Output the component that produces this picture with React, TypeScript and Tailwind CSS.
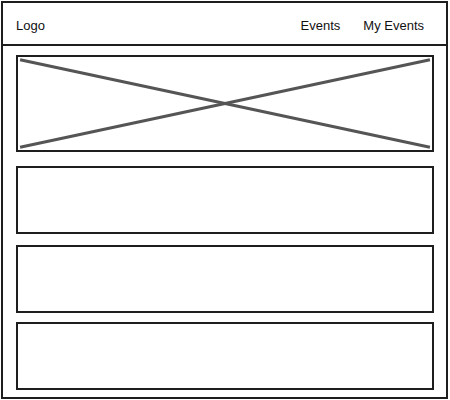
import React from "react";

export default function App() {
  return (
    <div className="w-[450px] h-[400px] bg-white pt-[1px] pl-[1px]" style={{ fontFamily: '"Liberation Sans", Arial, sans-serif' }}>
      <div className="w-[447px] h-[398px] border-2 border-[#1e1e1e] flex flex-col">
        <div className="h-[43px] border-b-2 border-[#1e1e1e] flex items-center justify-between pl-[13px] pr-[22px] pt-[4px] text-[13px] text-[#111]">
          <span>Logo</span>
          <div className="flex gap-[23px]">
            <span>Events</span>
            <span>My Events</span>
          </div>
        </div>
        <div className="flex flex-col pl-[13px] pr-[12px] pt-[9px]">
          <div className="h-[97px] border-2 border-[#1e1e1e] relative">
            <svg className="absolute inset-0 w-full h-full" viewBox="0 0 100 100" preserveAspectRatio="none">
              <line x1="0.5" y1="3" x2="99.5" y2="97" stroke="#555" strokeWidth="3" vectorEffect="non-scaling-stroke" />
              <line x1="0.5" y1="97" x2="99.5" y2="3" stroke="#555" strokeWidth="3" vectorEffect="non-scaling-stroke" />
            </svg>
          </div>
          <div className="h-[68px] mt-[14px] border-2 border-[#1e1e1e]" />
          <div className="h-[68px] mt-[11px] border-2 border-[#1e1e1e]" />
          <div className="h-[68px] mt-[9px] border-2 border-[#1e1e1e]" />
        </div>
      </div>
    </div>
  );
}
